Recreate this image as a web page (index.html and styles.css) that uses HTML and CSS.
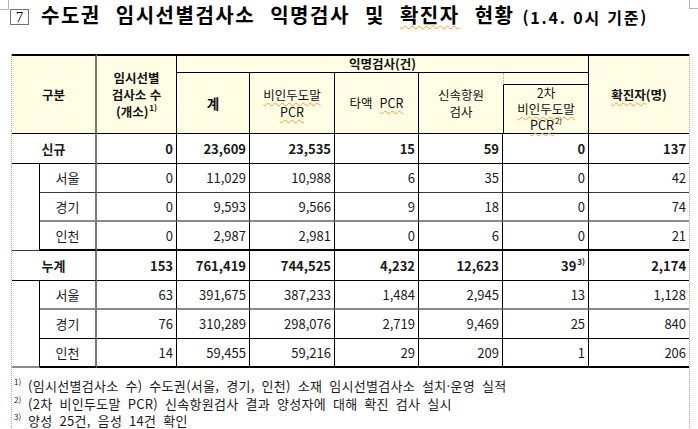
FILE: index.html
```html
<!DOCTYPE html>
<html lang="ko">
<head>
<meta charset="utf-8">
<title>수도권 임시선별검사소 익명검사 및 확진자 현황</title>
<link rel="stylesheet" href="styles.css">
</head>
<body>
<div class="page">
  <div class="mark mark-tl"></div>
  <div class="mark mark-tr"></div>
  <h1 class="title"><span class="num">7</span><span class="main">수도권 임시선별검사소 익명검사 및 <span class="sp">확진자</span> 현황</span><span class="sub">(1.4. 0시 기준)</span></h1>
  <table class="stat">
    <colgroup>
      <col class="c0"><col class="c1"><col class="c2"><col class="c3"><col class="c4"><col class="c5"><col class="c6"><col class="c7"><col class="c8">
    </colgroup>
    <thead>
      <tr class="h1">
        <th colspan="2" rowspan="3" class="b gb">구분</th>
        <th rowspan="3" class="b tall">임시선별<br>검사소 수<br>(개소)<sup>1)</sup></th>
        <th colspan="5" class="b">익명검사(건)</th>
        <th rowspan="3" class="b last"><span class="sp">확진자</span>(명)</th>
      </tr>
      <tr class="h2">
        <th rowspan="2" class="b big">계</th>
        <th rowspan="2" class="tall"><span class="sp">비인두도말</span><br><span class="sp">PCR</span></th>
        <th rowspan="2">타액&nbsp; <span class="sp">PCR</span></th>
        <th rowspan="2" class="nr tall">신속항원<br>검사</th>
        <th class="gap"></th>
      </tr>
      <tr class="h3">
        <th class="second">2차<br><span class="sp">비인두도말</span><br><span class="sp">PCR</span><sup>2)</sup></th>
      </tr>
    </thead>
    <tbody>
      <tr class="tot">
        <td colspan="2" class="lab b gb">신규</td>
        <td class="b">0</td><td class="b">23,609</td><td class="b">23,535</td><td class="b">15</td><td class="b">59</td><td class="b">0</td><td class="b last">137</td>
      </tr>
      <tr class="s1">
        <td rowspan="3" class="blank"></td>
        <td class="lab gb">서울</td>
        <td>0</td><td>11,029</td><td>10,988</td><td>6</td><td>35</td><td>0</td><td class="last">42</td>
      </tr>
      <tr class="s2">
        <td class="lab gb">경기</td>
        <td>0</td><td>9,593</td><td>9,566</td><td>9</td><td>18</td><td>0</td><td class="last">74</td>
      </tr>
      <tr class="end">
        <td class="lab gb">인천</td>
        <td>0</td><td>2,987</td><td>2,981</td><td>0</td><td>6</td><td>0</td><td class="last">21</td>
      </tr>
      <tr class="tot">
        <td colspan="2" class="lab b gb">누계</td>
        <td class="b">153</td><td class="b">761,419</td><td class="b">744,525</td><td class="b">4,232</td><td class="b">12,623</td><td class="b">39<sup>3)</sup></td><td class="b last">2,174</td>
      </tr>
      <tr class="t1">
        <td rowspan="3" class="blank"></td>
        <td class="lab gb">서울</td>
        <td>63</td><td>391,675</td><td>387,233</td><td>1,484</td><td>2,945</td><td>13</td><td class="last">1,128</td>
      </tr>
      <tr class="t2">
        <td class="lab gb">경기</td>
        <td>76</td><td>310,289</td><td>298,076</td><td>2,719</td><td>9,469</td><td>25</td><td class="last">840</td>
      </tr>
      <tr class="end">
        <td class="lab gb">인천</td>
        <td>14</td><td>59,455</td><td>59,216</td><td>29</td><td>209</td><td>1</td><td class="last">206</td>
      </tr>
    </tbody>
    <tfoot>
      <tr class="foot">
        <td colspan="9">
          <div class="fn"><sup>1)</sup><span>(임시선별검사소 수) 수도권(서울, 경기, 인천) 소재 임시선별검사소 설치·운영 실적</span></div>
          <div class="fn"><sup>2)</sup><span>(2차 비인두도말 PCR) 신속항원검사 결과 양성자에 대해 확진 검사 실시</span></div>
          <div class="fn"><sup>3)</sup><span>양성 25건, 음성 14건 확인</span></div>
        </td>
      </tr>
    </tfoot>
  </table>
</div>
</body>
</html>
```

FILE: styles.css
```css
* { box-sizing: border-box; }
html, body { margin: 0; padding: 0; background: #fff; }
body {
  font-family: "Noto Sans CJK KR", "Noto Sans", sans-serif;
  color: #111;
  width: 698px;
  height: 429px;
  overflow: hidden;
}
.page { position: relative; padding-left: 11px; }

.mark { position: absolute; border: 0 solid #b4b4b4; }
.mark-tl { left: 0; top: 0; width: 9px; height: 10px; border-right-width: 1px; border-bottom-width: 1px; }
.mark-tr { left: 689px; top: 0; width: 9px; height: 9px; border-left-width: 1px; border-bottom-width: 1px; }

.title {
  margin: 0;
  height: 54px;
  display: flex;
  align-items: flex-start;
  font-weight: 700;
  color: #000;
}
.title .num {
  margin: 9px 0 0 -1px;
  width: 19px;
  height: 16px;
  border: 1px solid #707070;
  font-family: "Liberation Serif", serif;
  font-weight: 400;
  font-size: 15px;
  line-height: 14px;
  text-align: center;
}
.title .main {
  margin: 5px 0 0 12px;
  font-size: 20px;
  line-height: 20px;
  letter-spacing: 1.5px;
  word-spacing: 8px;
}
.title .sub {
  margin: 9px 0 0 8px;
  font-size: 16px;
  line-height: 16px;
  letter-spacing: 1.8px;
}
.sp {
  text-decoration: underline wavy #f0a040;
  text-decoration-thickness: 1px;
  text-underline-offset: 2px;
}

.stat {
  border-collapse: separate;
  border-spacing: 0;
  table-layout: fixed;
  width: 679px;
  border-left: 1px dotted #f09090;
  border-right: 1px dotted #f09090;
  font-size: 13px;
}
.c0 { width: 28px; }
.c1 { width: 57px; }
.c2 { width: 80px; }
.c3 { width: 73px; }
.c4 { width: 85px; }
.c5 { width: 84px; }
.c6 { width: 84px; }
.c7 { width: 86px; }
.c8 { width: 100px; }

.stat th, .stat td {
  padding: 0 3px;
  border-right: 1px solid #000;
  border-bottom: 1px solid #000;
  white-space: nowrap;
}
.stat .last { border-right: none; }
.stat .gb { border-right: 2px solid #7a7a7a; }
.stat .b { font-weight: 700; }

.stat thead th {
  background: #fffee5;
  font-weight: 400;
  font-size: 12.5px;
  line-height: 16px;
  text-align: center;
  vertical-align: middle;
  color: #111;
}
.stat thead th.b { font-weight: 700; }
.stat thead th.big { font-size: 13.5px; }
.stat thead th.tall { line-height: 17px; }
.stat tr.h1 th { border-top: 2px solid #000; }
.stat tr.h1 { height: 19px; }
.stat tr.h2 { height: 12px; }
.stat tr.h3 { height: 49px; }
.stat th.nr { border-right: none; }
.stat th.gap { border-left: 1px dotted #f09090; }
.stat th.second { border-left: 1px solid #000; }
.stat sup { font-size: 8px; line-height: 0; vertical-align: 6px; margin-left: 1px; }

.stat tbody td {
  text-align: right;
  vertical-align: middle;
  line-height: 16px;
  color: #1a1a1a;
}
.stat tbody td.lab { text-align: center; }
.stat tbody tr { height: 29px; }
.stat tbody tr.tot { height: 30px; }
.stat tbody tr.s1 td { border-bottom: 1px solid #3a3a3a; }
.stat tbody tr.s2 td { border-bottom: 2px solid #8a8a8a; }
.stat tbody tr.t1 td { border-bottom: 2px solid #8a8a8a; }
.stat tbody tr.t2 td { border-bottom: 1px solid #000; }
.stat tbody tr.end td { border-bottom: 2px solid #000; }
.stat tbody td.blank { border-bottom: 2px solid #000; border-right: 1px solid #000; }

.stat tfoot td {
  border: none;
  padding: 9px 0 12px 2px;
  font-size: 13px;
  line-height: 17.5px;
  color: #1a1a1a;
}
.fn { display: flex; align-items: flex-start; word-spacing: 3px; letter-spacing: 0.3px; }
.fn sup {
  width: 14px;
  font-size: 8px;
  line-height: 10px;
  vertical-align: top;
  margin: 0;
  letter-spacing: 0;
}
```
